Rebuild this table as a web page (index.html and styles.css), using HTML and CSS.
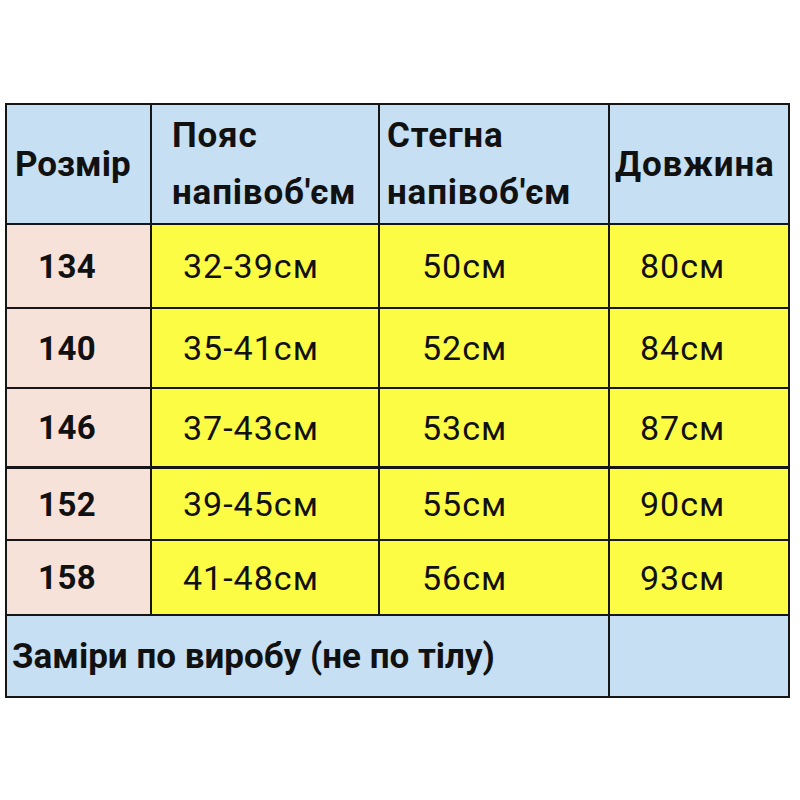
FILE: index.html
```html
<!DOCTYPE html>
<html lang="uk">
<head>
<meta charset="utf-8">
<link rel="stylesheet" href="styles.css">
</head>
<body>
<div class="sheet">
  <div class="cell head c1"><span>Розмір</span></div>
  <div class="cell head c2"><span>Пояс<br>напівоб'єм</span></div>
  <div class="cell head c3"><span>Стегна<br>напівоб'єм</span></div>
  <div class="cell head c4"><span>Довжина</span></div>

  <div class="cell size">134</div>
  <div class="cell val v2">32-39см</div>
  <div class="cell val v3">50см</div>
  <div class="cell val v4">80см</div>

  <div class="cell size">140</div>
  <div class="cell val v2">35-41см</div>
  <div class="cell val v3">52см</div>
  <div class="cell val v4">84см</div>

  <div class="cell size">146</div>
  <div class="cell val v2">37-43см</div>
  <div class="cell val v3">53см</div>
  <div class="cell val v4">87см</div>

  <div class="cell size thick">152</div>
  <div class="cell val v2 thick">39-45см</div>
  <div class="cell val v3 thick">55см</div>
  <div class="cell val v4 thick">90см</div>

  <div class="cell size">158</div>
  <div class="cell val v2">41-48см</div>
  <div class="cell val v3">56см</div>
  <div class="cell val v4">93см</div>

  <div class="cell foot">Заміри по виробу (не по тілу)</div>
  <div class="cell foot-empty"></div>
</div>
</body>
</html>
```

FILE: styles.css
```css
html, body {
  margin: 0;
  padding: 0;
  background: #ffffff;
}

body {
  font-family: Roboto, "Noto Sans", "DejaVu Sans", sans-serif;
  color: #111111;
}

.sheet {
  display: grid;
  grid-template-columns: 143px 226px 228px 178px;
  grid-template-rows: 118px 82px 78px 77px 71px 73px 80px;
  gap: 2px;
  padding: 2px;
  background: #161616;
  width: 781px;
  margin: 103px 0 0 5px;
}

.cell {
  display: flex;
  align-items: center;
  box-sizing: border-box;
}

.head {
  background: #c6dff2;
  font-weight: 700;
  font-size: 35px;
  line-height: 57px;
  letter-spacing: 0.8px;
}

.c1 { padding-left: 8px; letter-spacing: 0; }
.c2 { padding-left: 20px; }
.c3 { padding-left: 7px; }
.c4 { padding-left: 5px; }

.size {
  background: #f6e2d8;
  font-weight: 700;
  font-size: 33px;
  padding-left: 31px;
  letter-spacing: 0.5px;
}

.val {
  background: #fdfc45;
  font-size: 34px;
  font-weight: 400;
  letter-spacing: 1px;
}

.v2 { padding-left: 31px; }
.v3 { padding-left: 42px; }
.v4 { padding-left: 30px; }

.thick {
  border-top: 1px solid #161616;
}

.foot {
  grid-column: 1 / 4;
  background: #c6dff2;
  font-weight: 700;
  font-size: 35px;
  padding-left: 5px;
}

.foot-empty {
  background: #c6dff2;
}
```
